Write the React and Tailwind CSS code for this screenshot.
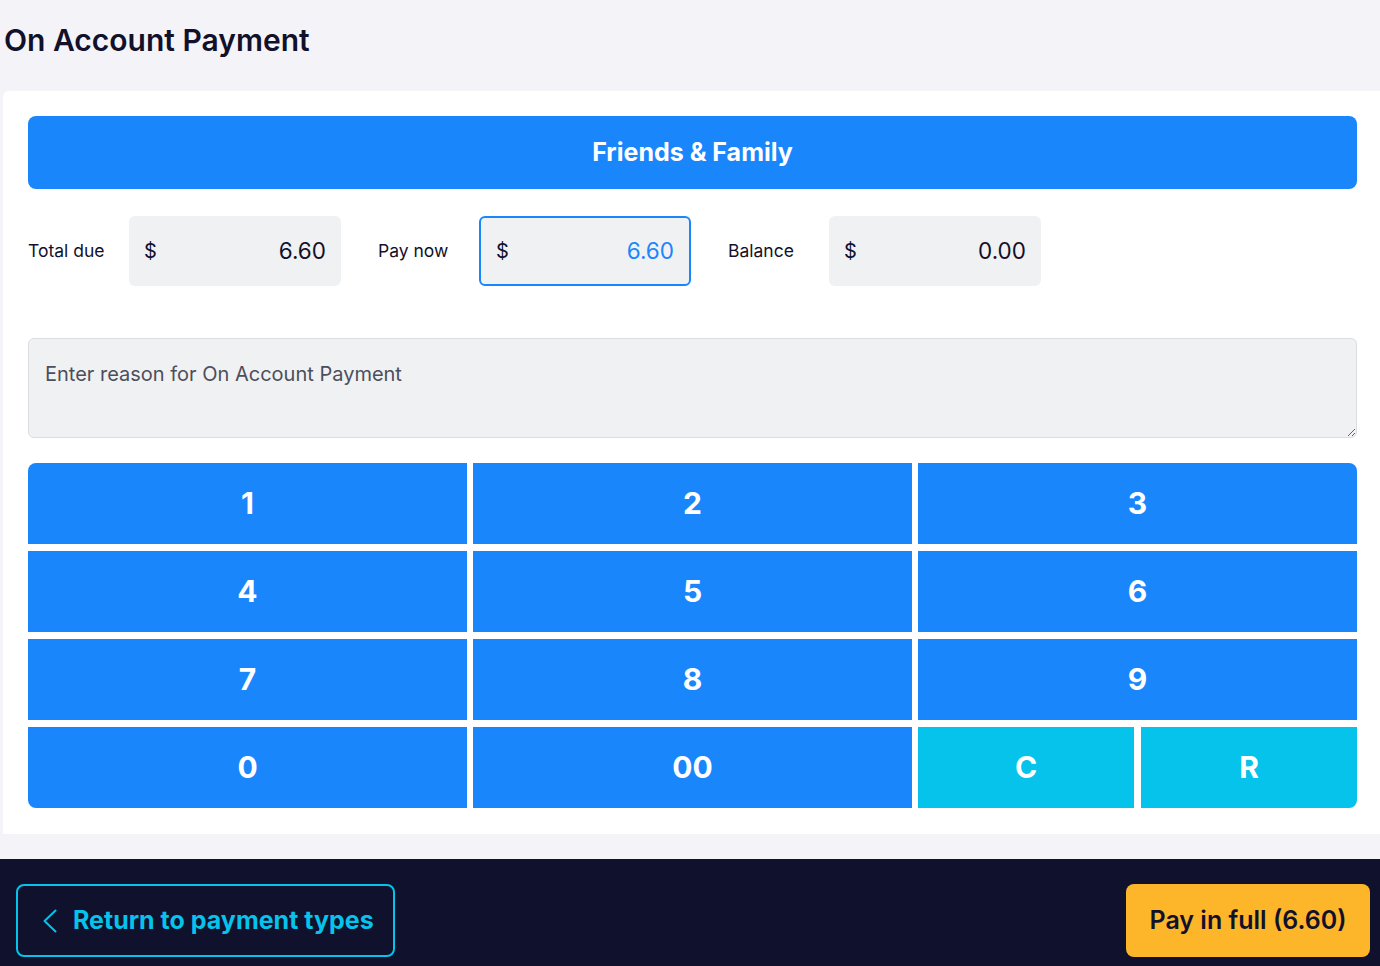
import React, { useState } from 'react';

const KEYS = [
  ['1', '2', '3'],
  ['4', '5', '6'],
  ['7', '8', '9'],
];

const AmountBox = ({ value, active }) => (
  <div
    className={
      'w-[212px] h-[70px] rounded-md bg-[#f0f1f3] flex items-center justify-between ' +
      (active ? 'px-[15px] border-2 border-[#1a86fc]' : 'px-[14px] border border-transparent')
    }
  >
    <span className="text-[20px] text-[#11112b]">$</span>
    <span className={'text-[22.5px] ' + (active ? 'text-[#1a86fc]' : 'text-[#11112b]')}>{value}</span>
  </div>
);

const Field = ({ label, value, active }) => (
  <div className="flex items-center">
    <span className="w-[101px] text-[17.5px] text-[#11112b]">{label}</span>
    <AmountBox value={value} active={active} />
  </div>
);

const App = () => {
  const [reason, setReason] = useState('');

  return (
    <div className="min-h-screen bg-[#f4f4f8] flex flex-col" style={{ fontFamily: 'Inter, "Noto Sans", sans-serif' }}>
      <div className="pl-[3px]">
        <h1 className="pt-[22px] pl-[1px] text-[30px] leading-[36px] font-semibold text-[#11112b] mb-[33px]">
          On Account Payment
        </h1>

        <div className="bg-white rounded-tl-md pt-[25px] pb-[26px] pl-[25px] pr-[23px]">
          <div className="h-[73px] rounded-lg bg-[#1a86fc] flex items-center justify-center text-white text-[25px] font-bold">
            Friends &amp; Family
          </div>

          <div className="mt-[27px] flex items-center gap-[37px]">
            <Field label="Total due" value="6.60" />
            <Field label="Pay now" value="6.60" active />
            <Field label="Balance" value="0.00" />
          </div>

          <textarea
            value={reason}
            onChange={e => setReason(e.target.value)}
            placeholder="Enter reason for On Account Payment"
            className="mt-[52px] block w-full h-[100px] rounded-md bg-[#f0f1f3] border border-[#dcdce3] px-[16px] py-[22px] text-[20px] leading-[26px] text-[#11112b] placeholder:text-[#4b4f5c] outline-none"
          />

          <div className="mt-[25px] flex flex-col gap-[7px]">
            {KEYS.map((row, r) => (
              <div key={r} className="grid grid-cols-3 gap-[6px]">
                {row.map((k, c) => (
                  <button
                    key={k}
                    className={
                      'h-[81px] bg-[#1a86fc] text-white text-[30px] font-bold ' +
                      (r === 0 && c === 0 ? 'rounded-tl-lg' : '') +
                      (r === 0 && c === 2 ? 'rounded-tr-lg' : '')
                    }
                  >
                    {k}
                  </button>
                ))}
              </div>
            ))}
            <div className="grid grid-cols-3 gap-[6px]">
              <button className="h-[81px] bg-[#1a86fc] text-white text-[30px] font-bold rounded-bl-lg">0</button>
              <button className="h-[81px] bg-[#1a86fc] text-white text-[30px] font-bold">00</button>
              <div className="grid grid-cols-2 gap-[7px]">
                <button className="h-[81px] bg-[#05c3eb] text-white text-[30px] font-bold">C</button>
                <button className="h-[81px] bg-[#05c3eb] text-white text-[30px] font-bold rounded-br-lg">R</button>
              </div>
            </div>
          </div>
        </div>
      </div>

      <div className="mt-[25px] flex-1 bg-[#10112c] flex items-start justify-between pt-[25px] pb-[25px] pl-[16px] pr-[10px]">
        <button className="h-[73px] w-[379px] rounded-lg border-2 border-[#05c3eb] flex items-center pl-[25px] gap-[16px] text-[#05c3eb] text-[25px] font-bold">
          {/* back chevron */}
          <svg width="14" height="24" viewBox="0 0 14 24" fill="none" stroke="currentColor" strokeWidth="2" strokeLinecap="round" strokeLinejoin="round">
            <polyline points="12.5,1.5 1.5,12 12.5,22.5" />
          </svg>
          Return to payment types
        </button>
        <button className="h-[73px] w-[244px] rounded-lg bg-[#fdb52a] text-[#11112b] text-[25px] font-semibold">
          Pay in full (6.60)
        </button>
      </div>
    </div>
  );
};

export default App;
